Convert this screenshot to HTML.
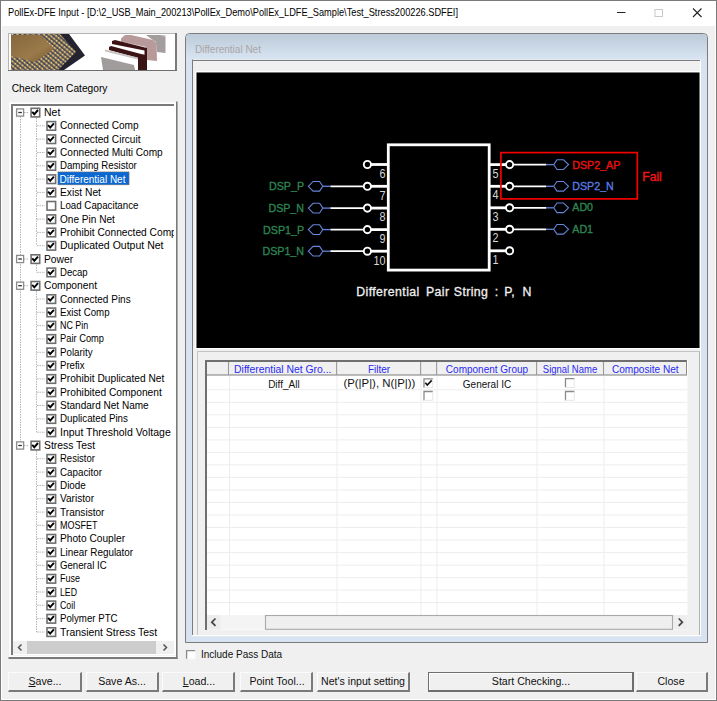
<!DOCTYPE html>
<html><head><meta charset="utf-8">
<style>
*{margin:0;padding:0;box-sizing:border-box}
html,body{width:717px;height:701px;overflow:hidden;background:#7a7a7a}
body{font-family:"Liberation Sans",sans-serif;position:relative;color:#000}
.a{position:absolute}
.t{position:absolute;white-space:nowrap}
svg.s{position:absolute;left:0;top:0;overflow:visible}
</style></head><body>
<div class="a" style="left:0px;top:0px;width:717px;height:701px;background:#7a7a7a;"></div>
<div class="a" style="left:1px;top:1px;width:715px;height:699px;background:#ffffff;"></div>
<div class="a" style="left:2px;top:26px;width:713px;height:673px;background:#f0f0f0;"></div>
<div class="a" style="left:1px;top:1px;width:715px;height:25px;background:#ffffff;"></div>
<div class="t" style="left:8px;top:7.46px;font-size:10.8px;line-height:10.8px;color:#000;transform-origin:0 0;transform:scaleX(0.855)">PollEx-DFE Input - [D:\2_USB_Main_200213\PollEx_Demo\PollEx_LDFE_Sample\Test_Stress200226.SDFEI]</div>
<svg class="s" width="717" height="30">
<line x1="617" y1="12.5" x2="625.5" y2="12.5" stroke="#222" stroke-width="1"/>
<rect x="655" y="9.5" width="7.5" height="7" fill="none" stroke="#c8c8c8" stroke-width="1"/>
<path d="M693 8.5 L701.5 17 M701.5 8.5 L693 17" stroke="#222" stroke-width="1.1"/>
</svg>
<svg class="s" width="717" height="80">
<defs>
<linearGradient id="chip" x1="0" y1="0" x2="1" y2="1">
<stop offset="0" stop-color="#86673d"/><stop offset="0.6" stop-color="#9a7a4a"/><stop offset="1" stop-color="#7a5c34"/>
</linearGradient>
<pattern id="pins" width="3.4" height="3.4" patternUnits="userSpaceOnUse" patternTransform="rotate(40)">
<rect width="3.4" height="3.4" fill="#45475c"/><ellipse cx="1.7" cy="1.7" rx="1.55" ry="1.1" fill="#cfa954"/><circle cx="1.2" cy="1.3" r="0.5" fill="#f6eed4"/>
</pattern>
</defs>
<rect x="8" y="33" width="169" height="38" fill="#fff"/>
<line x1="8" y1="33.5" x2="177" y2="33.5" stroke="#b4b4b4"/>
<line x1="8.5" y1="33" x2="8.5" y2="71" stroke="#b4b4b4"/>
<rect x="175" y="33" width="2" height="38" fill="#7a7a7a"/>
<line x1="8" y1="70.5" x2="177" y2="70.5" stroke="#6e6e6e"/>
<path d="M11 34 L69 34 L85 55.5 L64 70 L11 70 Z" fill="#23242f"/>
<path d="M11 34 L60 34 L76 52 L58 70 L11 70 Z" fill="url(#pins)"/>
<path d="M11 35 L41 35 L54 49 L35 62 L11 56 Z" fill="url(#chip)"/>
<path d="M146 35 L164 35 L165.5 37 L165.5 53 L157 52 L156 42 L150 38 Z" fill="#a39d9d"/><path d="M160 35 L165.5 35 L165.5 37 Z" fill="#c8c8d0"/>
<path d="M121 38.5 L125 35 L131 35 L153 40 L156.5 43 L157 61 L147 60 L146 47 L121 41.5 Z" fill="#b99a9a"/>
<path d="M112 41 L115 40 L147 48 L147 70 L144.5 70 L144.5 50.5 L112 44 Z" fill="#3d1414"/>
<path d="M109 47 L111 46 L141 54 L146 55 L146 70 L138 70 L138 58 L109 50 Z" fill="#3d1414"/>
<path d="M101 57 L134 65 L135 70 L103 70 Z" fill="#a19c9c"/>
<path d="M105 49.5 L138 57.5 L138 59.5 L105 51.5 Z" fill="#c9c4c4"/>
</svg>
<div class="t" style="left:11.7px;top:83.57px;font-size:10.2px;line-height:10.2px;color:#000;transform-origin:0 8.63px;transform:scale(1.0,1.08)">Check Item Category</div>
<div class="a" style="left:9px;top:102px;width:168px;height:556px;background:#ffffff;"></div>
<svg class="s" width="717" height="701">
<line x1="9" y1="102.5" x2="177" y2="102.5" stroke="#fafafa"/>
<line x1="9.5" y1="102" x2="9.5" y2="658" stroke="#fafafa"/>
<rect x="11" y="104" width="164" height="2" fill="#7a7a7a"/>
<rect x="11" y="104" width="2" height="551" fill="#7a7a7a"/>
<rect x="176" y="101.5" width="1.6" height="557.5" fill="#7a7a7a"/>
<rect x="8.5" y="657" width="169" height="2" fill="#7a7a7a"/>
<line x1="174.5" y1="104" x2="174.5" y2="656" stroke="#ffffff"/>
<line x1="11" y1="655.5" x2="176" y2="655.5" stroke="#f4f4f4"/>
</svg>
<svg class="s" width="717" height="701">
<defs><clipPath id="tc"><rect x="12" y="105" width="162" height="535"/></clipPath></defs><g clip-path="url(#tc)">
<line x1="20.5" y1="116.5" x2="20.5" y2="441.5" stroke="#b4b4b4" stroke-width="1" stroke-dasharray="1.5 1"/>
<line x1="36.5" y1="118.0" x2="36.5" y2="245.7" stroke="#b4b4b4" stroke-width="1" stroke-dasharray="1.5 1"/>
<line x1="36.5" y1="264.52" x2="36.5" y2="272.34000000000003" stroke="#b4b4b4" stroke-width="1" stroke-dasharray="1.5 1"/>
<line x1="36.5" y1="291.15999999999997" x2="36.5" y2="432.18" stroke="#b4b4b4" stroke-width="1" stroke-dasharray="1.5 1"/>
<line x1="36.5" y1="451.0" x2="36.5" y2="631.98" stroke="#b4b4b4" stroke-width="1" stroke-dasharray="1.5 1"/>
<line x1="24" y1="112.5" x2="29" y2="112.5" stroke="#b4b4b4" stroke-width="1" stroke-dasharray="1.5 1"/>
<rect x="16.6" y="108.9" width="7" height="7.2" fill="#fff" stroke="#8c8c8c" stroke-width="1.3"/>
<line x1="18.3" y1="112.5" x2="21.9" y2="112.5" stroke="#333" stroke-width="1.3"/>
<rect x="31.1" y="108.3" width="8.6" height="8.6" fill="#fff" stroke="#6e6e6e" stroke-width="1.6"/>
<path d="M32.20 111.80 L34.30 114.20 L38.00 110.00" fill="none" stroke="#000" stroke-width="1.9"/>
<line x1="37" y1="125.8" x2="45" y2="125.8" stroke="#b4b4b4" stroke-width="1" stroke-dasharray="1.5 1"/>
<rect x="47.0" y="121.6" width="8.6" height="8.6" fill="#fff" stroke="#6e6e6e" stroke-width="1.6"/>
<path d="M48.10 125.12 L50.20 127.52 L53.90 123.32" fill="none" stroke="#000" stroke-width="1.9"/>
<line x1="37" y1="139.1" x2="45" y2="139.1" stroke="#b4b4b4" stroke-width="1" stroke-dasharray="1.5 1"/>
<rect x="47.0" y="134.9" width="8.6" height="8.6" fill="#fff" stroke="#6e6e6e" stroke-width="1.6"/>
<path d="M48.10 138.44 L50.20 140.84 L53.90 136.64" fill="none" stroke="#000" stroke-width="1.9"/>
<line x1="37" y1="152.5" x2="45" y2="152.5" stroke="#b4b4b4" stroke-width="1" stroke-dasharray="1.5 1"/>
<rect x="47.0" y="148.3" width="8.6" height="8.6" fill="#fff" stroke="#6e6e6e" stroke-width="1.6"/>
<path d="M48.10 151.76 L50.20 154.16 L53.90 149.96" fill="none" stroke="#000" stroke-width="1.9"/>
<line x1="37" y1="165.8" x2="45" y2="165.8" stroke="#b4b4b4" stroke-width="1" stroke-dasharray="1.5 1"/>
<rect x="47.0" y="161.6" width="8.6" height="8.6" fill="#fff" stroke="#6e6e6e" stroke-width="1.6"/>
<path d="M48.10 165.08 L50.20 167.48 L53.90 163.28" fill="none" stroke="#000" stroke-width="1.9"/>
<line x1="37" y1="179.1" x2="45" y2="179.1" stroke="#b4b4b4" stroke-width="1" stroke-dasharray="1.5 1"/>
<rect x="47.0" y="174.9" width="8.6" height="8.6" fill="#fff" stroke="#6e6e6e" stroke-width="1.6"/>
<path d="M48.10 178.40 L50.20 180.80 L53.90 176.60" fill="none" stroke="#000" stroke-width="1.9"/>
<rect x="57.8" y="171.8" width="71.4" height="13.1" fill="#0b68d0" stroke="#c08a50" stroke-width="0.8" stroke-dasharray="1 1"/>
<line x1="37" y1="192.4" x2="45" y2="192.4" stroke="#b4b4b4" stroke-width="1" stroke-dasharray="1.5 1"/>
<rect x="47.0" y="188.2" width="8.6" height="8.6" fill="#fff" stroke="#6e6e6e" stroke-width="1.6"/>
<path d="M48.10 191.72 L50.20 194.12 L53.90 189.92" fill="none" stroke="#000" stroke-width="1.9"/>
<line x1="37" y1="205.7" x2="45" y2="205.7" stroke="#b4b4b4" stroke-width="1" stroke-dasharray="1.5 1"/>
<rect x="47.0" y="201.5" width="8.6" height="8.6" fill="#fff" stroke="#6e6e6e" stroke-width="1.6"/>
<line x1="37" y1="219.1" x2="45" y2="219.1" stroke="#b4b4b4" stroke-width="1" stroke-dasharray="1.5 1"/>
<rect x="47.0" y="214.9" width="8.6" height="8.6" fill="#fff" stroke="#6e6e6e" stroke-width="1.6"/>
<path d="M48.10 218.36 L50.20 220.76 L53.90 216.56" fill="none" stroke="#000" stroke-width="1.9"/>
<line x1="37" y1="232.4" x2="45" y2="232.4" stroke="#b4b4b4" stroke-width="1" stroke-dasharray="1.5 1"/>
<rect x="47.0" y="228.2" width="8.6" height="8.6" fill="#fff" stroke="#6e6e6e" stroke-width="1.6"/>
<path d="M48.10 231.68 L50.20 234.08 L53.90 229.88" fill="none" stroke="#000" stroke-width="1.9"/>
<line x1="37" y1="245.7" x2="45" y2="245.7" stroke="#b4b4b4" stroke-width="1" stroke-dasharray="1.5 1"/>
<rect x="47.0" y="241.5" width="8.6" height="8.6" fill="#fff" stroke="#6e6e6e" stroke-width="1.6"/>
<path d="M48.10 245.00 L50.20 247.40 L53.90 243.20" fill="none" stroke="#000" stroke-width="1.9"/>
<line x1="24" y1="259.0" x2="29" y2="259.0" stroke="#b4b4b4" stroke-width="1" stroke-dasharray="1.5 1"/>
<rect x="16.6" y="255.4" width="7" height="7.2" fill="#fff" stroke="#8c8c8c" stroke-width="1.3"/>
<line x1="18.3" y1="259.0" x2="21.9" y2="259.0" stroke="#333" stroke-width="1.3"/>
<rect x="31.1" y="254.8" width="8.6" height="8.6" fill="#fff" stroke="#6e6e6e" stroke-width="1.6"/>
<path d="M32.20 258.32 L34.30 260.72 L38.00 256.52" fill="none" stroke="#000" stroke-width="1.9"/>
<line x1="37" y1="272.3" x2="45" y2="272.3" stroke="#b4b4b4" stroke-width="1" stroke-dasharray="1.5 1"/>
<rect x="47.0" y="268.1" width="8.6" height="8.6" fill="#fff" stroke="#6e6e6e" stroke-width="1.6"/>
<path d="M48.10 271.64 L50.20 274.04 L53.90 269.84" fill="none" stroke="#000" stroke-width="1.9"/>
<line x1="24" y1="285.7" x2="29" y2="285.7" stroke="#b4b4b4" stroke-width="1" stroke-dasharray="1.5 1"/>
<rect x="16.6" y="282.1" width="7" height="7.2" fill="#fff" stroke="#8c8c8c" stroke-width="1.3"/>
<line x1="18.3" y1="285.7" x2="21.9" y2="285.7" stroke="#333" stroke-width="1.3"/>
<rect x="31.1" y="281.5" width="8.6" height="8.6" fill="#fff" stroke="#6e6e6e" stroke-width="1.6"/>
<path d="M32.20 284.96 L34.30 287.36 L38.00 283.16" fill="none" stroke="#000" stroke-width="1.9"/>
<line x1="37" y1="299.0" x2="45" y2="299.0" stroke="#b4b4b4" stroke-width="1" stroke-dasharray="1.5 1"/>
<rect x="47.0" y="294.8" width="8.6" height="8.6" fill="#fff" stroke="#6e6e6e" stroke-width="1.6"/>
<path d="M48.10 298.28 L50.20 300.68 L53.90 296.48" fill="none" stroke="#000" stroke-width="1.9"/>
<line x1="37" y1="312.3" x2="45" y2="312.3" stroke="#b4b4b4" stroke-width="1" stroke-dasharray="1.5 1"/>
<rect x="47.0" y="308.1" width="8.6" height="8.6" fill="#fff" stroke="#6e6e6e" stroke-width="1.6"/>
<path d="M48.10 311.60 L50.20 314.00 L53.90 309.80" fill="none" stroke="#000" stroke-width="1.9"/>
<line x1="37" y1="325.6" x2="45" y2="325.6" stroke="#b4b4b4" stroke-width="1" stroke-dasharray="1.5 1"/>
<rect x="47.0" y="321.4" width="8.6" height="8.6" fill="#fff" stroke="#6e6e6e" stroke-width="1.6"/>
<path d="M48.10 324.92 L50.20 327.32 L53.90 323.12" fill="none" stroke="#000" stroke-width="1.9"/>
<line x1="37" y1="338.9" x2="45" y2="338.9" stroke="#b4b4b4" stroke-width="1" stroke-dasharray="1.5 1"/>
<rect x="47.0" y="334.7" width="8.6" height="8.6" fill="#fff" stroke="#6e6e6e" stroke-width="1.6"/>
<path d="M48.10 338.24 L50.20 340.64 L53.90 336.44" fill="none" stroke="#000" stroke-width="1.9"/>
<line x1="37" y1="352.3" x2="45" y2="352.3" stroke="#b4b4b4" stroke-width="1" stroke-dasharray="1.5 1"/>
<rect x="47.0" y="348.1" width="8.6" height="8.6" fill="#fff" stroke="#6e6e6e" stroke-width="1.6"/>
<path d="M48.10 351.56 L50.20 353.96 L53.90 349.76" fill="none" stroke="#000" stroke-width="1.9"/>
<line x1="37" y1="365.6" x2="45" y2="365.6" stroke="#b4b4b4" stroke-width="1" stroke-dasharray="1.5 1"/>
<rect x="47.0" y="361.4" width="8.6" height="8.6" fill="#fff" stroke="#6e6e6e" stroke-width="1.6"/>
<path d="M48.10 364.88 L50.20 367.28 L53.90 363.08" fill="none" stroke="#000" stroke-width="1.9"/>
<line x1="37" y1="378.9" x2="45" y2="378.9" stroke="#b4b4b4" stroke-width="1" stroke-dasharray="1.5 1"/>
<rect x="47.0" y="374.7" width="8.6" height="8.6" fill="#fff" stroke="#6e6e6e" stroke-width="1.6"/>
<path d="M48.10 378.20 L50.20 380.60 L53.90 376.40" fill="none" stroke="#000" stroke-width="1.9"/>
<line x1="37" y1="392.2" x2="45" y2="392.2" stroke="#b4b4b4" stroke-width="1" stroke-dasharray="1.5 1"/>
<rect x="47.0" y="388.0" width="8.6" height="8.6" fill="#fff" stroke="#6e6e6e" stroke-width="1.6"/>
<path d="M48.10 391.52 L50.20 393.92 L53.90 389.72" fill="none" stroke="#000" stroke-width="1.9"/>
<line x1="37" y1="405.5" x2="45" y2="405.5" stroke="#b4b4b4" stroke-width="1" stroke-dasharray="1.5 1"/>
<rect x="47.0" y="401.3" width="8.6" height="8.6" fill="#fff" stroke="#6e6e6e" stroke-width="1.6"/>
<path d="M48.10 404.84 L50.20 407.24 L53.90 403.04" fill="none" stroke="#000" stroke-width="1.9"/>
<line x1="37" y1="418.9" x2="45" y2="418.9" stroke="#b4b4b4" stroke-width="1" stroke-dasharray="1.5 1"/>
<rect x="47.0" y="414.7" width="8.6" height="8.6" fill="#fff" stroke="#6e6e6e" stroke-width="1.6"/>
<path d="M48.10 418.16 L50.20 420.56 L53.90 416.36" fill="none" stroke="#000" stroke-width="1.9"/>
<line x1="37" y1="432.2" x2="45" y2="432.2" stroke="#b4b4b4" stroke-width="1" stroke-dasharray="1.5 1"/>
<rect x="47.0" y="428.0" width="8.6" height="8.6" fill="#fff" stroke="#6e6e6e" stroke-width="1.6"/>
<path d="M48.10 431.48 L50.20 433.88 L53.90 429.68" fill="none" stroke="#000" stroke-width="1.9"/>
<line x1="24" y1="445.5" x2="29" y2="445.5" stroke="#b4b4b4" stroke-width="1" stroke-dasharray="1.5 1"/>
<rect x="16.6" y="441.9" width="7" height="7.2" fill="#fff" stroke="#8c8c8c" stroke-width="1.3"/>
<line x1="18.3" y1="445.5" x2="21.9" y2="445.5" stroke="#333" stroke-width="1.3"/>
<rect x="31.1" y="441.3" width="8.6" height="8.6" fill="#fff" stroke="#6e6e6e" stroke-width="1.6"/>
<path d="M32.20 444.80 L34.30 447.20 L38.00 443.00" fill="none" stroke="#000" stroke-width="1.9"/>
<line x1="37" y1="458.8" x2="45" y2="458.8" stroke="#b4b4b4" stroke-width="1" stroke-dasharray="1.5 1"/>
<rect x="47.0" y="454.6" width="8.6" height="8.6" fill="#fff" stroke="#6e6e6e" stroke-width="1.6"/>
<path d="M48.10 458.12 L50.20 460.52 L53.90 456.32" fill="none" stroke="#000" stroke-width="1.9"/>
<line x1="37" y1="472.1" x2="45" y2="472.1" stroke="#b4b4b4" stroke-width="1" stroke-dasharray="1.5 1"/>
<rect x="47.0" y="467.9" width="8.6" height="8.6" fill="#fff" stroke="#6e6e6e" stroke-width="1.6"/>
<path d="M48.10 471.44 L50.20 473.84 L53.90 469.64" fill="none" stroke="#000" stroke-width="1.9"/>
<line x1="37" y1="485.5" x2="45" y2="485.5" stroke="#b4b4b4" stroke-width="1" stroke-dasharray="1.5 1"/>
<rect x="47.0" y="481.3" width="8.6" height="8.6" fill="#fff" stroke="#6e6e6e" stroke-width="1.6"/>
<path d="M48.10 484.76 L50.20 487.16 L53.90 482.96" fill="none" stroke="#000" stroke-width="1.9"/>
<line x1="37" y1="498.8" x2="45" y2="498.8" stroke="#b4b4b4" stroke-width="1" stroke-dasharray="1.5 1"/>
<rect x="47.0" y="494.6" width="8.6" height="8.6" fill="#fff" stroke="#6e6e6e" stroke-width="1.6"/>
<path d="M48.10 498.08 L50.20 500.48 L53.90 496.28" fill="none" stroke="#000" stroke-width="1.9"/>
<line x1="37" y1="512.1" x2="45" y2="512.1" stroke="#b4b4b4" stroke-width="1" stroke-dasharray="1.5 1"/>
<rect x="47.0" y="507.9" width="8.6" height="8.6" fill="#fff" stroke="#6e6e6e" stroke-width="1.6"/>
<path d="M48.10 511.40 L50.20 513.80 L53.90 509.60" fill="none" stroke="#000" stroke-width="1.9"/>
<line x1="37" y1="525.4" x2="45" y2="525.4" stroke="#b4b4b4" stroke-width="1" stroke-dasharray="1.5 1"/>
<rect x="47.0" y="521.2" width="8.6" height="8.6" fill="#fff" stroke="#6e6e6e" stroke-width="1.6"/>
<path d="M48.10 524.72 L50.20 527.12 L53.90 522.92" fill="none" stroke="#000" stroke-width="1.9"/>
<line x1="37" y1="538.7" x2="45" y2="538.7" stroke="#b4b4b4" stroke-width="1" stroke-dasharray="1.5 1"/>
<rect x="47.0" y="534.5" width="8.6" height="8.6" fill="#fff" stroke="#6e6e6e" stroke-width="1.6"/>
<path d="M48.10 538.04 L50.20 540.44 L53.90 536.24" fill="none" stroke="#000" stroke-width="1.9"/>
<line x1="37" y1="552.1" x2="45" y2="552.1" stroke="#b4b4b4" stroke-width="1" stroke-dasharray="1.5 1"/>
<rect x="47.0" y="547.9" width="8.6" height="8.6" fill="#fff" stroke="#6e6e6e" stroke-width="1.6"/>
<path d="M48.10 551.36 L50.20 553.76 L53.90 549.56" fill="none" stroke="#000" stroke-width="1.9"/>
<line x1="37" y1="565.4" x2="45" y2="565.4" stroke="#b4b4b4" stroke-width="1" stroke-dasharray="1.5 1"/>
<rect x="47.0" y="561.2" width="8.6" height="8.6" fill="#fff" stroke="#6e6e6e" stroke-width="1.6"/>
<path d="M48.10 564.68 L50.20 567.08 L53.90 562.88" fill="none" stroke="#000" stroke-width="1.9"/>
<line x1="37" y1="578.7" x2="45" y2="578.7" stroke="#b4b4b4" stroke-width="1" stroke-dasharray="1.5 1"/>
<rect x="47.0" y="574.5" width="8.6" height="8.6" fill="#fff" stroke="#6e6e6e" stroke-width="1.6"/>
<path d="M48.10 578.00 L50.20 580.40 L53.90 576.20" fill="none" stroke="#000" stroke-width="1.9"/>
<line x1="37" y1="592.0" x2="45" y2="592.0" stroke="#b4b4b4" stroke-width="1" stroke-dasharray="1.5 1"/>
<rect x="47.0" y="587.8" width="8.6" height="8.6" fill="#fff" stroke="#6e6e6e" stroke-width="1.6"/>
<path d="M48.10 591.32 L50.20 593.72 L53.90 589.52" fill="none" stroke="#000" stroke-width="1.9"/>
<line x1="37" y1="605.3" x2="45" y2="605.3" stroke="#b4b4b4" stroke-width="1" stroke-dasharray="1.5 1"/>
<rect x="47.0" y="601.1" width="8.6" height="8.6" fill="#fff" stroke="#6e6e6e" stroke-width="1.6"/>
<path d="M48.10 604.64 L50.20 607.04 L53.90 602.84" fill="none" stroke="#000" stroke-width="1.9"/>
<line x1="37" y1="618.7" x2="45" y2="618.7" stroke="#b4b4b4" stroke-width="1" stroke-dasharray="1.5 1"/>
<rect x="47.0" y="614.5" width="8.6" height="8.6" fill="#fff" stroke="#6e6e6e" stroke-width="1.6"/>
<path d="M48.10 617.96 L50.20 620.36 L53.90 616.16" fill="none" stroke="#000" stroke-width="1.9"/>
<line x1="37" y1="632.0" x2="45" y2="632.0" stroke="#b4b4b4" stroke-width="1" stroke-dasharray="1.5 1"/>
<rect x="47.0" y="627.8" width="8.6" height="8.6" fill="#fff" stroke="#6e6e6e" stroke-width="1.6"/>
<path d="M48.10 631.28 L50.20 633.68 L53.90 629.48" fill="none" stroke="#000" stroke-width="1.9"/>
</g></svg>
<div class="a" style="left:12px;top:105px;width:162px;height:536px;overflow:hidden"><div class="a" style="left:-12px;top:-105px;width:717px;height:701px">
<div class="t" style="left:43.6px;top:108.03px;font-size:10px;line-height:10px;color:#000;transform-origin:0 8.46px;transform:scale(1.047,1.08)">Net</div>
<div class="t" style="left:59.5px;top:121.35px;font-size:10px;line-height:10px;color:#000;transform-origin:0 8.46px;transform:scale(1.010,1.08)">Connected Comp</div>
<div class="t" style="left:59.5px;top:134.67px;font-size:10px;line-height:10px;color:#000;transform-origin:0 8.46px;transform:scale(1.013,1.08)">Connected Circuit</div>
<div class="t" style="left:59.5px;top:148.00px;font-size:10px;line-height:10px;color:#000;transform-origin:0 8.46px;transform:scale(1.010,1.08)">Connected Multi Comp</div>
<div class="t" style="left:59.5px;top:161.31px;font-size:10px;line-height:10px;color:#000;transform-origin:0 8.46px;transform:scale(0.966,1.08)">Damping Resistor</div>
<div class="t" style="left:59.5px;top:174.63px;font-size:10px;line-height:10px;color:#fff;transform-origin:0 8.46px;transform:scale(1.000,1.08)">Differential Net</div>
<div class="t" style="left:59.5px;top:187.96px;font-size:10px;line-height:10px;color:#000;transform-origin:0 8.46px;transform:scale(1.023,1.08)">Exist Net</div>
<div class="t" style="left:59.5px;top:201.28px;font-size:10px;line-height:10px;color:#000;transform-origin:0 8.46px;transform:scale(0.973,1.08)">Load Capacitance</div>
<div class="t" style="left:59.5px;top:214.59px;font-size:10px;line-height:10px;color:#000;transform-origin:0 8.46px;transform:scale(1.006,1.08)">One Pin Net</div>
<div class="t" style="left:59.5px;top:227.91px;font-size:10px;line-height:10px;color:#000;transform-origin:0 8.46px;transform:scale(1.020,1.08)">Prohibit Connected Comp</div>
<div class="t" style="left:59.5px;top:241.23px;font-size:10px;line-height:10px;color:#000;transform-origin:0 8.46px;transform:scale(1.052,1.08)">Duplicated Output Net</div>
<div class="t" style="left:43.6px;top:254.55px;font-size:10px;line-height:10px;color:#000;transform-origin:0 8.46px;transform:scale(1.030,1.08)">Power</div>
<div class="t" style="left:59.5px;top:267.88px;font-size:10px;line-height:10px;color:#000;transform-origin:0 8.46px;transform:scale(0.957,1.08)">Decap</div>
<div class="t" style="left:43.6px;top:281.19px;font-size:10px;line-height:10px;color:#000;transform-origin:0 8.46px;transform:scale(1.025,1.08)">Component</div>
<div class="t" style="left:59.5px;top:294.52px;font-size:10px;line-height:10px;color:#000;transform-origin:0 8.46px;transform:scale(1.001,1.08)">Connected Pins</div>
<div class="t" style="left:59.5px;top:307.84px;font-size:10px;line-height:10px;color:#000;transform-origin:0 8.46px;transform:scale(0.970,1.08)">Exist Comp</div>
<div class="t" style="left:59.5px;top:321.16px;font-size:10px;line-height:10px;color:#000;transform-origin:0 8.46px;transform:scale(0.890,1.08)">NC Pin</div>
<div class="t" style="left:59.5px;top:334.48px;font-size:10px;line-height:10px;color:#000;transform-origin:0 8.46px;transform:scale(0.932,1.08)">Pair Comp</div>
<div class="t" style="left:59.5px;top:347.80px;font-size:10px;line-height:10px;color:#000;transform-origin:0 8.46px;transform:scale(0.976,1.08)">Polarity</div>
<div class="t" style="left:59.5px;top:361.12px;font-size:10px;line-height:10px;color:#000;transform-origin:0 8.46px;transform:scale(0.960,1.08)">Prefix</div>
<div class="t" style="left:59.5px;top:374.44px;font-size:10px;line-height:10px;color:#000;transform-origin:0 8.46px;transform:scale(1.020,1.08)">Prohibit Duplicated Net</div>
<div class="t" style="left:59.5px;top:387.76px;font-size:10px;line-height:10px;color:#000;transform-origin:0 8.46px;transform:scale(1.023,1.08)">Prohibited Component</div>
<div class="t" style="left:59.5px;top:401.08px;font-size:10px;line-height:10px;color:#000;transform-origin:0 8.46px;transform:scale(1.003,1.08)">Standard Net Name</div>
<div class="t" style="left:59.5px;top:414.40px;font-size:10px;line-height:10px;color:#000;transform-origin:0 8.46px;transform:scale(0.977,1.08)">Duplicated Pins</div>
<div class="t" style="left:59.5px;top:427.72px;font-size:10px;line-height:10px;color:#000;transform-origin:0 8.46px;transform:scale(1.050,1.08)">Input Threshold Voltage</div>
<div class="t" style="left:43.6px;top:441.04px;font-size:10px;line-height:10px;color:#000;transform-origin:0 8.46px;transform:scale(1.035,1.08)">Stress Test</div>
<div class="t" style="left:59.5px;top:454.36px;font-size:10px;line-height:10px;color:#000;transform-origin:0 8.46px;transform:scale(0.950,1.08)">Resistor</div>
<div class="t" style="left:59.5px;top:467.68px;font-size:10px;line-height:10px;color:#000;transform-origin:0 8.46px;transform:scale(0.979,1.08)">Capacitor</div>
<div class="t" style="left:59.5px;top:481.00px;font-size:10px;line-height:10px;color:#000;transform-origin:0 8.46px;transform:scale(0.988,1.08)">Diode</div>
<div class="t" style="left:59.5px;top:494.32px;font-size:10px;line-height:10px;color:#000;transform-origin:0 8.46px;transform:scale(1.009,1.08)">Varistor</div>
<div class="t" style="left:59.5px;top:507.64px;font-size:10px;line-height:10px;color:#000;transform-origin:0 8.46px;transform:scale(1.009,1.08)">Transistor</div>
<div class="t" style="left:59.5px;top:520.96px;font-size:10px;line-height:10px;color:#000;transform-origin:0 8.46px;transform:scale(0.902,1.08)">MOSFET</div>
<div class="t" style="left:59.5px;top:534.27px;font-size:10px;line-height:10px;color:#000;transform-origin:0 8.46px;transform:scale(1.017,1.08)">Photo Coupler</div>
<div class="t" style="left:59.5px;top:547.59px;font-size:10px;line-height:10px;color:#000;transform-origin:0 8.46px;transform:scale(0.989,1.08)">Linear Regulator</div>
<div class="t" style="left:59.5px;top:560.91px;font-size:10px;line-height:10px;color:#000;transform-origin:0 8.46px;transform:scale(0.965,1.08)">General IC</div>
<div class="t" style="left:59.5px;top:574.24px;font-size:10px;line-height:10px;color:#000;transform-origin:0 8.46px;transform:scale(0.900,1.08)">Fuse</div>
<div class="t" style="left:59.5px;top:587.55px;font-size:10px;line-height:10px;color:#000;transform-origin:0 8.46px;transform:scale(0.874,1.08)">LED</div>
<div class="t" style="left:59.5px;top:600.88px;font-size:10px;line-height:10px;color:#000;transform-origin:0 8.46px;transform:scale(0.875,1.08)">Coil</div>
<div class="t" style="left:59.5px;top:614.20px;font-size:10px;line-height:10px;color:#000;transform-origin:0 8.46px;transform:scale(0.969,1.08)">Polymer PTC</div>
<div class="t" style="left:59.5px;top:627.51px;font-size:10px;line-height:10px;color:#000;transform-origin:0 8.46px;transform:scale(1.040,1.08)">Transient Stress Test</div>
</div></div>
<div class="a" style="left:175px;top:102px;width:2px;height:556px;background:transparent;"></div>
<div class="a" style="left:13px;top:641px;width:161px;height:12.5px;background:#f0f0f0;"></div>
<div class="a" style="left:27px;top:641px;width:129px;height:12.5px;background:#cdcdcd;"></div>
<svg class="s" width="717" height="701">
<path d="M21.5 644.5 L18.5 647.5 L21.5 650.5" fill="none" stroke="#555" stroke-width="1.5"/>
<path d="M163.5 644.5 L166.5 647.5 L163.5 650.5" fill="none" stroke="#555" stroke-width="1.5"/>
</svg>
<svg class="s" width="717" height="701">
<defs><linearGradient id="pg" x1="0" y1="0" x2="0" y2="1">
<stop offset="0" stop-color="#bccad9"/><stop offset="1" stop-color="#d9e5f2"/></linearGradient></defs>
<path d="M185.5 642.5 L185.5 37.5 Q185.5 33.5 189.5 33.5 L703.5 33.5 Q707.5 33.5 707.5 37.5 L707.5 642.5 Z" fill="#d7e3f0" stroke="#7c7c7c"/>
<path d="M186 60 L186 37.5 Q186 34 189.5 34 L703.5 34 Q707 34 707 37.5 L707 60 Z" fill="url(#pg)"/>
<rect x="192" y="59.5" width="509" height="577" fill="#f0f0f0"/>
<line x1="192.5" y1="59.5" x2="192.5" y2="636" stroke="#7c7c7c"/>
<line x1="192" y1="60.5" x2="700" y2="60.5" stroke="#7c7c7c"/>
<line x1="700.5" y1="60" x2="700.5" y2="636" stroke="#ffffff"/>
<line x1="192" y1="635.5" x2="701" y2="635.5" stroke="#ffffff"/>
<line x1="195.5" y1="72" x2="195.5" y2="349" stroke="#ffffff"/>
<line x1="196" y1="71.5" x2="700" y2="71.5" stroke="#ffffff"/>
<rect x="196.5" y="72.5" width="503" height="275.5" fill="#000"/>
<line x1="196" y1="348.5" x2="700" y2="348.5" stroke="#ffffff"/>
<line x1="197" y1="351.5" x2="699" y2="351.5" stroke="#c4c4c4"/>
<line x1="197.5" y1="351" x2="197.5" y2="635" stroke="#c4c4c4"/>
<line x1="699.5" y1="351" x2="699.5" y2="635" stroke="#b4b4b4"/>
</svg>
<div class="t" style="left:195px;top:44.53px;font-size:10px;line-height:10px;color:#a9a6a6;">Differential Net</div>
<svg class="s" width="717" height="701">
<rect x="205" y="360" width="483" height="270" fill="#ffffff"/>
<rect x="207" y="362" width="480" height="13" fill="#f0f0f0"/>
<rect x="205" y="360" width="2" height="270" fill="#6f6f6f"/>
<rect x="205" y="360" width="482" height="2" fill="#6f6f6f"/>
<line x1="207" y1="375" x2="687" y2="375" stroke="#7a7a7a" stroke-width="1.2"/>
<line x1="686.5" y1="361" x2="686.5" y2="375" stroke="#8a8a8a"/>
<line x1="228.5" y1="362" x2="228.5" y2="375" stroke="#9a9a9a" stroke-width="1.1"/>
<line x1="336.6" y1="362" x2="336.6" y2="375" stroke="#9a9a9a" stroke-width="1.1"/>
<line x1="420.6" y1="362" x2="420.6" y2="375" stroke="#9a9a9a" stroke-width="1.1"/>
<line x1="436.6" y1="362" x2="436.6" y2="375" stroke="#9a9a9a" stroke-width="1.1"/>
<line x1="536.6" y1="362" x2="536.6" y2="375" stroke="#9a9a9a" stroke-width="1.1"/>
<line x1="603.5" y1="362" x2="603.5" y2="375" stroke="#9a9a9a" stroke-width="1.1"/>
<line x1="229.5" y1="376" x2="229.5" y2="615" stroke="#ededed"/>
<line x1="337" y1="376" x2="337" y2="615" stroke="#ededed"/>
<line x1="421" y1="376" x2="421" y2="615" stroke="#ededed"/>
<line x1="437" y1="376" x2="437" y2="615" stroke="#ededed"/>
<line x1="537" y1="376" x2="537" y2="615" stroke="#ededed"/>
<line x1="604" y1="376" x2="604" y2="615" stroke="#ededed"/>
<line x1="207" y1="389.8" x2="687" y2="389.8" stroke="#ededed"/>
<line x1="207" y1="402.3" x2="687" y2="402.3" stroke="#ededed"/>
<line x1="207" y1="414.8" x2="687" y2="414.8" stroke="#ededed"/>
<line x1="207" y1="427.4" x2="687" y2="427.4" stroke="#ededed"/>
<line x1="207" y1="439.9" x2="687" y2="439.9" stroke="#ededed"/>
<line x1="207" y1="452.4" x2="687" y2="452.4" stroke="#ededed"/>
<line x1="207" y1="464.9" x2="687" y2="464.9" stroke="#ededed"/>
<line x1="207" y1="477.4" x2="687" y2="477.4" stroke="#ededed"/>
<line x1="207" y1="490.0" x2="687" y2="490.0" stroke="#ededed"/>
<line x1="207" y1="502.5" x2="687" y2="502.5" stroke="#ededed"/>
<line x1="207" y1="515.0" x2="687" y2="515.0" stroke="#ededed"/>
<line x1="207" y1="527.5" x2="687" y2="527.5" stroke="#ededed"/>
<line x1="207" y1="540.0" x2="687" y2="540.0" stroke="#ededed"/>
<line x1="207" y1="552.6" x2="687" y2="552.6" stroke="#ededed"/>
<line x1="207" y1="565.1" x2="687" y2="565.1" stroke="#ededed"/>
<line x1="207" y1="577.6" x2="687" y2="577.6" stroke="#ededed"/>
<line x1="207" y1="590.1" x2="687" y2="590.1" stroke="#ededed"/>
<line x1="207" y1="602.6" x2="687" y2="602.6" stroke="#ededed"/>
<line x1="687.5" y1="375" x2="687.5" y2="630" stroke="#f6f6f6"/>
<rect x="207" y="615" width="480.5" height="14.5" fill="#f4f4f4"/>
<rect x="207" y="615" width="13.5" height="14.5" fill="#ececec"/>
<rect x="673" y="615" width="14.5" height="14.5" fill="#eeeeee"/>
<rect x="265.5" y="615.5" width="407" height="13.8" fill="#efefef" stroke="#a9a9a9" stroke-width="1.1"/>
<path d="M215.5 618.5 L211.8 622.2 L215.5 625.9" fill="none" stroke="#444" stroke-width="1.7"/>
<path d="M678.7 618.5 L682.4 622.2 L678.7 625.9" fill="none" stroke="#444" stroke-width="1.7"/>
<rect x="423.5" y="378.4" width="9.5" height="9.5" fill="#fff"/><path d="M424.0 387.9 L424.0 378.9 L433.0 378.9" fill="none" stroke="#8a8a8a" stroke-width="1.3"/><path d="M432.8 378.9 L432.8 387.7 L423.5 387.7" fill="none" stroke="#e6e6e6" stroke-width="1"/><path d="M425.3 382.7 L427.3 385.0 L431.7 380.4" fill="none" stroke="#111" stroke-width="1.6"/>
<rect x="423.5" y="391" width="9.5" height="9.5" fill="#fff"/><path d="M424.0 400.5 L424.0 391.5 L433.0 391.5" fill="none" stroke="#8a8a8a" stroke-width="1.3"/><path d="M432.8 391.5 L432.8 400.3 L423.5 400.3" fill="none" stroke="#e6e6e6" stroke-width="1"/>
<rect x="565" y="378.2" width="9.5" height="9.5" fill="#fff"/><path d="M565.5 387.7 L565.5 378.7 L574.5 378.7" fill="none" stroke="#8a8a8a" stroke-width="1.3"/><path d="M574.3 378.7 L574.3 387.5 L565 387.5" fill="none" stroke="#e6e6e6" stroke-width="1"/>
<rect x="565" y="391" width="9.5" height="9.5" fill="#fff"/><path d="M565.5 400.5 L565.5 391.5 L574.5 391.5" fill="none" stroke="#8a8a8a" stroke-width="1.3"/><path d="M574.3 391.5 L574.3 400.3 L565 400.3" fill="none" stroke="#e6e6e6" stroke-width="1"/>
</svg>
<div class="t" style="left:282.8px;transform:translateX(-50%);top:364.60px;font-size:10.4px;line-height:10.4px;color:#2a2af5;">Differential Net Gro...</div>
<div class="t" style="left:379px;transform:translateX(-50%);top:364.94px;font-size:10px;line-height:10px;color:#2a2af5;">Filter</div>
<div class="t" style="left:487px;transform:translateX(-50%);top:364.94px;font-size:10px;line-height:10px;color:#2a2af5;">Component Group</div>
<div class="t" style="left:570.3px;top:364.94px;font-size:10px;line-height:10px;color:#2a2af5;transform:translateX(-50%) scaleX(0.95)">Signal Name</div>
<div class="t" style="left:645.3px;transform:translateX(-50%);top:364.85px;font-size:10.1px;line-height:10.1px;color:#2a2af5;">Composite Net</div>
<div class="t" style="left:283.9px;transform:translateX(-50%);top:379.54px;font-size:10px;line-height:10px;color:#111;">Diff_All</div>
<div class="t" style="left:379.4px;transform:translateX(-50%);top:378.35px;font-size:11.4px;line-height:11.4px;color:#111;">(P(|P|), N(|P|))</div>
<div class="t" style="left:487px;transform:translateX(-50%);top:379.54px;font-size:10px;line-height:10px;color:#111;">General IC</div>
<svg class="s" width="717" height="701">
<rect x="186" y="650" width="9.5" height="9" fill="#fff"/>
<path d="M186.6 659 L186.6 650.6 L195.5 650.6" fill="none" stroke="#8a8a8a" stroke-width="1.3"/>
<path d="M195.3 650.5 L195.3 659 L186.5 659" fill="none" stroke="#f6f6f6" stroke-width="1"/>
</svg>
<div class="t" style="left:201px;top:650.03px;font-size:10px;line-height:10px;color:#111;">Include Pass Data</div>
<div class="a" style="left:8.4px;top:671.7px;width:73.6px;height:20.09999999999991px;background:#f0f0f0;border-top:1px solid #fbfbfb;border-left:1px solid #fbfbfb;border-right:2px solid #7a7a7a;border-bottom:2px solid #7a7a7a"></div>
<div class="t" style="left:45.2px;top:677.03px;font-size:10px;line-height:10px;color:#111;transform:translateX(-50%) scaleX(1.06)"><u>S</u>ave...</div>
<div class="a" style="left:85.9px;top:671.7px;width:72.79999999999998px;height:20.09999999999991px;background:#f0f0f0;border-top:1px solid #fbfbfb;border-left:1px solid #fbfbfb;border-right:2px solid #7a7a7a;border-bottom:2px solid #7a7a7a"></div>
<div class="t" style="left:122.3px;top:677.03px;font-size:10px;line-height:10px;color:#111;transform:translateX(-50%) scaleX(1.06)">Save As...</div>
<div class="a" style="left:162px;top:671.7px;width:73px;height:20.09999999999991px;background:#f0f0f0;border-top:1px solid #fbfbfb;border-left:1px solid #fbfbfb;border-right:2px solid #7a7a7a;border-bottom:2px solid #7a7a7a"></div>
<div class="t" style="left:198.5px;top:677.03px;font-size:10px;line-height:10px;color:#111;transform:translateX(-50%) scaleX(1.06)"><u>L</u>oad...</div>
<div class="a" style="left:240px;top:671.7px;width:73px;height:20.09999999999991px;background:#f0f0f0;border-top:1px solid #fbfbfb;border-left:1px solid #fbfbfb;border-right:2px solid #7a7a7a;border-bottom:2px solid #7a7a7a"></div>
<div class="t" style="left:276.5px;top:677.03px;font-size:10px;line-height:10px;color:#111;transform:translateX(-50%) scaleX(1.06)">Point Tool...</div>
<div class="a" style="left:317px;top:671.7px;width:92.5px;height:20.09999999999991px;background:#f0f0f0;border-top:1px solid #fbfbfb;border-left:1px solid #fbfbfb;border-right:2px solid #7a7a7a;border-bottom:2px solid #7a7a7a"></div>
<div class="t" style="left:363.25px;top:677.03px;font-size:10px;line-height:10px;color:#111;transform:translateX(-50%) scaleX(1.06)">Net's input setting</div>
<div class="a" style="left:428.3px;top:671.7px;width:205.49999999999994px;height:20.09999999999991px;background:#f0f0f0;border-top:1px solid #6e6e6e;border-left:1px solid #6e6e6e;border-right:2px solid #6e6e6e;border-bottom:2px solid #6e6e6e;box-shadow:inset 1px 1px 0 #fcfcfc"></div>
<div class="t" style="left:531.05px;top:677.03px;font-size:10px;line-height:10px;color:#111;transform:translateX(-50%) scaleX(1.06)">Start Checking...</div>
<div class="a" style="left:635.5px;top:671.7px;width:72.5px;height:20.09999999999991px;background:#f0f0f0;border-top:1px solid #fbfbfb;border-left:1px solid #fbfbfb;border-right:2px solid #7a7a7a;border-bottom:2px solid #7a7a7a"></div>
<div class="t" style="left:670.75px;top:677.03px;font-size:10px;line-height:10px;color:#111;transform:translateX(-50%) scaleX(1.06)">Close</div>
<svg class="s" width="717" height="701" style="font-family:'Liberation Sans',sans-serif">
<rect x="388.3" y="144.8" width="100.9" height="125.3" fill="none" stroke="#fff" stroke-width="2.8"/>
<line x1="371" y1="164.5" x2="388" y2="164.5" stroke="#fff" stroke-width="2.8"/>
<circle cx="367.4" cy="164.5" r="3.6" fill="none" stroke="#fff" stroke-width="1.9"/>
<line x1="371" y1="186.3" x2="388" y2="186.3" stroke="#fff" stroke-width="2.8"/>
<circle cx="367.4" cy="186.3" r="3.6" fill="none" stroke="#fff" stroke-width="1.9"/>
<line x1="330.3" y1="186.3" x2="363.6" y2="186.3" stroke="#fff" stroke-width="1.8"/>
<line x1="322.9" y1="186.3" x2="330.5" y2="186.3" stroke="#6684d8" stroke-width="1.3"/>
<path d="M308.3 186.3 L313.1 181.45000000000002 L319.6 181.45000000000002 L322.8 186.3 L319.6 191.15 L313.1 191.15 Z" fill="none" stroke="#6684d8" stroke-width="1.1"/>
<line x1="371" y1="208.1" x2="388" y2="208.1" stroke="#fff" stroke-width="2.8"/>
<circle cx="367.4" cy="208.1" r="3.6" fill="none" stroke="#fff" stroke-width="1.9"/>
<line x1="330.3" y1="208.1" x2="363.6" y2="208.1" stroke="#fff" stroke-width="1.8"/>
<line x1="322.9" y1="208.1" x2="330.5" y2="208.1" stroke="#6684d8" stroke-width="1.3"/>
<path d="M308.3 208.1 L313.1 203.25 L319.6 203.25 L322.8 208.1 L319.6 212.95 L313.1 212.95 Z" fill="none" stroke="#6684d8" stroke-width="1.1"/>
<line x1="371" y1="229.6" x2="388" y2="229.6" stroke="#fff" stroke-width="2.8"/>
<circle cx="367.4" cy="229.6" r="3.6" fill="none" stroke="#fff" stroke-width="1.9"/>
<line x1="330.3" y1="229.6" x2="363.6" y2="229.6" stroke="#fff" stroke-width="1.8"/>
<line x1="322.9" y1="229.6" x2="330.5" y2="229.6" stroke="#6684d8" stroke-width="1.3"/>
<path d="M308.3 229.6 L313.1 224.75 L319.6 224.75 L322.8 229.6 L319.6 234.45 L313.1 234.45 Z" fill="none" stroke="#6684d8" stroke-width="1.1"/>
<line x1="371" y1="251.2" x2="388" y2="251.2" stroke="#fff" stroke-width="2.8"/>
<circle cx="367.4" cy="251.2" r="3.6" fill="none" stroke="#fff" stroke-width="1.9"/>
<line x1="330.3" y1="251.2" x2="363.6" y2="251.2" stroke="#fff" stroke-width="1.8"/>
<line x1="322.9" y1="251.2" x2="330.5" y2="251.2" stroke="#6684d8" stroke-width="1.3"/>
<path d="M308.3 251.2 L313.1 246.35 L319.6 246.35 L322.8 251.2 L319.6 256.05 L313.1 256.05 Z" fill="none" stroke="#6684d8" stroke-width="1.1"/>
<line x1="489" y1="164.6" x2="506" y2="164.6" stroke="#fff" stroke-width="2.8"/>
<circle cx="509.6" cy="164.6" r="3.6" fill="none" stroke="#fff" stroke-width="1.9"/>
<line x1="513.4" y1="164.6" x2="546.2" y2="164.6" stroke="#fff" stroke-width="1.8"/>
<line x1="546" y1="164.6" x2="553.6" y2="164.6" stroke="#6684d8" stroke-width="1.3"/>
<path d="M553.7 164.6 L557.0 159.75 L563.5 159.75 L568.5 164.6 L563.5 169.45 L557.0 169.45 Z" fill="none" stroke="#6684d8" stroke-width="1.1"/>
<line x1="489" y1="186.3" x2="506" y2="186.3" stroke="#fff" stroke-width="2.8"/>
<circle cx="509.6" cy="186.3" r="3.6" fill="none" stroke="#fff" stroke-width="1.9"/>
<line x1="513.4" y1="186.3" x2="546.2" y2="186.3" stroke="#fff" stroke-width="1.8"/>
<line x1="546" y1="186.3" x2="553.6" y2="186.3" stroke="#6684d8" stroke-width="1.3"/>
<path d="M553.7 186.3 L557.0 181.45000000000002 L563.5 181.45000000000002 L568.5 186.3 L563.5 191.15 L557.0 191.15 Z" fill="none" stroke="#6684d8" stroke-width="1.1"/>
<line x1="489" y1="207.8" x2="506" y2="207.8" stroke="#fff" stroke-width="2.8"/>
<circle cx="509.6" cy="207.8" r="3.6" fill="none" stroke="#fff" stroke-width="1.9"/>
<line x1="513.4" y1="207.8" x2="546.2" y2="207.8" stroke="#fff" stroke-width="1.8"/>
<line x1="546" y1="207.8" x2="553.6" y2="207.8" stroke="#6684d8" stroke-width="1.3"/>
<path d="M553.7 207.8 L557.0 202.95000000000002 L563.5 202.95000000000002 L568.5 207.8 L563.5 212.65 L557.0 212.65 Z" fill="none" stroke="#6684d8" stroke-width="1.1"/>
<line x1="489" y1="229.3" x2="506" y2="229.3" stroke="#fff" stroke-width="2.8"/>
<circle cx="509.6" cy="229.3" r="3.6" fill="none" stroke="#fff" stroke-width="1.9"/>
<line x1="513.4" y1="229.3" x2="546.2" y2="229.3" stroke="#fff" stroke-width="1.8"/>
<line x1="546" y1="229.3" x2="553.6" y2="229.3" stroke="#6684d8" stroke-width="1.3"/>
<path d="M553.7 229.3 L557.0 224.45000000000002 L563.5 224.45000000000002 L568.5 229.3 L563.5 234.15 L557.0 234.15 Z" fill="none" stroke="#6684d8" stroke-width="1.1"/>
<line x1="489" y1="250.8" x2="506" y2="250.8" stroke="#fff" stroke-width="2.8"/>
<circle cx="509.6" cy="250.8" r="3.6" fill="none" stroke="#fff" stroke-width="1.9"/>
<rect x="500.9" y="152.6" width="136.4" height="46.3" fill="none" stroke="#f40000" stroke-width="1.7"/>
<text x="385.6" y="177.9" font-size="12.6" fill="#d8d8d8" text-anchor="end" transform="translate(385.6 0) scale(0.86 1) translate(-385.6 0)">6</text>
<text x="385.6" y="199.70000000000002" font-size="12.6" fill="#d8d8d8" text-anchor="end" transform="translate(385.6 0) scale(0.86 1) translate(-385.6 0)">7</text>
<text x="385.6" y="221.5" font-size="12.6" fill="#d8d8d8" text-anchor="end" transform="translate(385.6 0) scale(0.86 1) translate(-385.6 0)">8</text>
<text x="385.6" y="243.0" font-size="12.6" fill="#d8d8d8" text-anchor="end" transform="translate(385.6 0) scale(0.86 1) translate(-385.6 0)">9</text>
<text x="385.6" y="264.59999999999997" font-size="12.6" fill="#d8d8d8" text-anchor="end" transform="translate(385.6 0) scale(0.86 1) translate(-385.6 0)">10</text>
<text x="492.6" y="177.6" font-size="12.6" fill="#d8d8d8" text-anchor="start" transform="translate(492.6 0) scale(0.86 1) translate(-492.6 0)">5</text>
<text x="492.6" y="199.3" font-size="12.6" fill="#d8d8d8" text-anchor="start" transform="translate(492.6 0) scale(0.86 1) translate(-492.6 0)">4</text>
<text x="492.6" y="220.8" font-size="12.6" fill="#d8d8d8" text-anchor="start" transform="translate(492.6 0) scale(0.86 1) translate(-492.6 0)">3</text>
<text x="492.6" y="242.3" font-size="12.6" fill="#d8d8d8" text-anchor="start" transform="translate(492.6 0) scale(0.86 1) translate(-492.6 0)">2</text>
<text x="492.6" y="263.8" font-size="12.6" fill="#d8d8d8" text-anchor="start" transform="translate(492.6 0) scale(0.86 1) translate(-492.6 0)">1</text>
<text x="304" y="190.2" font-size="11" fill="#2e8552" stroke="#2e8552" stroke-width="0.35" text-anchor="end" transform="translate(304 0) scale(0.97 1) translate(-304 0)">DSP_P</text>
<text x="304" y="212" font-size="11" fill="#2e8552" stroke="#2e8552" stroke-width="0.35" text-anchor="end" transform="translate(304 0) scale(0.97 1) translate(-304 0)">DSP_N</text>
<text x="304" y="233.8" font-size="11" fill="#2e8552" stroke="#2e8552" stroke-width="0.35" text-anchor="end" transform="translate(304 0) scale(0.97 1) translate(-304 0)">DSP1_P</text>
<text x="304" y="255" font-size="11" fill="#2e8552" stroke="#2e8552" stroke-width="0.35" text-anchor="end" transform="translate(304 0) scale(0.97 1) translate(-304 0)">DSP1_N</text>
<text x="572.3" y="169.5" font-size="11" fill="#f01010" stroke="#f01010" stroke-width="0.35" text-anchor="start" transform="translate(572.3 0) scale(0.97 1) translate(-572.3 0)">DSP2_AP</text>
<text x="572.3" y="190.3" font-size="11" fill="#5a7be0" stroke="#5a7be0" stroke-width="0.35" text-anchor="start" transform="translate(572.3 0) scale(0.97 1) translate(-572.3 0)">DSP2_N</text>
<text x="572.3" y="211.5" font-size="11" fill="#2e8552" stroke="#2e8552" stroke-width="0.35" text-anchor="start" transform="translate(572.3 0) scale(0.97 1) translate(-572.3 0)">AD0</text>
<text x="572.3" y="232.7" font-size="11" fill="#2e8552" stroke="#2e8552" stroke-width="0.35" text-anchor="start" transform="translate(572.3 0) scale(0.97 1) translate(-572.3 0)">AD1</text>
<text x="642.2" y="180.5" font-size="12.2" fill="#f41414" stroke="#f41414" stroke-width="0.35" text-anchor="start" transform="translate(642.2 0) scale(1.0 1) translate(-642.2 0)">Fail</text>
<text x="356.3" y="296" font-size="12.3" fill="#f0f0f0" stroke="#f0f0f0" stroke-width="0.3" letter-spacing="0.4">Differential</text>
<text x="426" y="296" font-size="12.3" fill="#f0f0f0" stroke="#f0f0f0" stroke-width="0.3" letter-spacing="0.4">Pair</text>
<text x="453.8" y="296" font-size="12.3" fill="#f0f0f0" stroke="#f0f0f0" stroke-width="0.3" letter-spacing="0.4">String</text>
<text x="494.8" y="296" font-size="12.3" fill="#f0f0f0" stroke="#f0f0f0" stroke-width="0.3" letter-spacing="0.4">:</text>
<text x="504.2" y="296" font-size="12.3" fill="#f0f0f0" stroke="#f0f0f0" stroke-width="0.3" letter-spacing="0.4">P,</text>
<text x="522.6" y="296" font-size="12.3" fill="#f0f0f0" stroke="#f0f0f0" stroke-width="0.3" letter-spacing="0.4">N</text>
</svg>
</body></html>
